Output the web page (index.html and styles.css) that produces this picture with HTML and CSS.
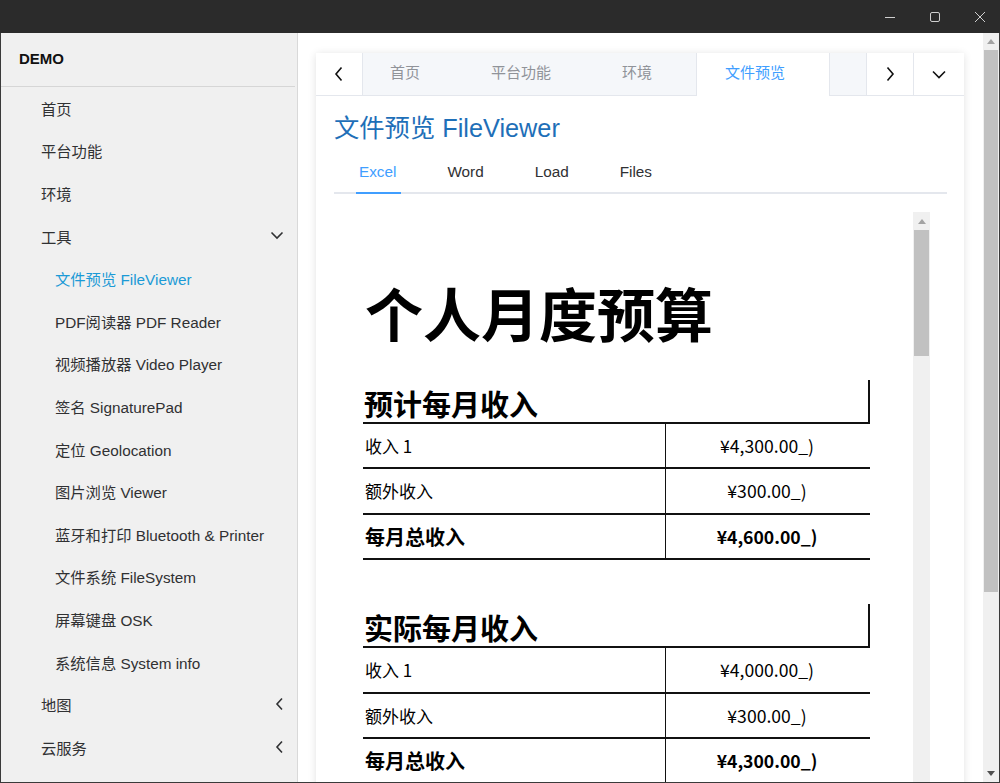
FILE: index.html
```html
<!DOCTYPE html>
<html lang="zh-CN">
<head>
<meta charset="utf-8">
<title>DEMO</title>
<link rel="stylesheet" href="styles.css">
</head>
<body>
<div class="window">
  <header class="titlebar">
    <span class="wc"><svg width="12" height="12" viewBox="0 0 12 12"><path d="M1 6.5h10" stroke="#cfcfcf" stroke-width="1"/></svg></span>
    <span class="wc"><svg width="12" height="12" viewBox="0 0 12 12"><rect x="1.5" y="1.5" width="9" height="9" rx="1.5" fill="none" stroke="#cfcfcf" stroke-width="1"/></svg></span>
    <span class="wc"><svg width="12" height="12" viewBox="0 0 12 12"><path d="M1 1l10 10M11 1L1 11" stroke="#cfcfcf" stroke-width="1"/></svg></span>
  </header>
  <div class="body">
    <aside class="sidebar">
      <div class="brand">DEMO</div>
      <nav class="menu">
        <div class="item">首页</div>
        <div class="item">平台功能</div>
        <div class="item">环境</div>
        <div class="item">工具<svg class="chev" width="14" height="9" viewBox="0 0 14 9"><path d="M1.5 1.5l5.5 5.5 5.5-5.5" fill="none" stroke="#303133" stroke-width="1.6"/></svg></div>
        <div class="item sub active">文件预览 FileViewer</div>
        <div class="item sub">PDF阅读器 PDF Reader</div>
        <div class="item sub">视频播放器 Video Player</div>
        <div class="item sub">签名 SignaturePad</div>
        <div class="item sub">定位 Geolocation</div>
        <div class="item sub">图片浏览 Viewer</div>
        <div class="item sub">蓝牙和打印 Bluetooth &amp; Printer</div>
        <div class="item sub">文件系统 FileSystem</div>
        <div class="item sub">屏幕键盘 OSK</div>
        <div class="item sub">系统信息 System info</div>
        <div class="item">地图<svg class="chev" width="9" height="14" viewBox="0 0 9 14"><path d="M7 1.5L2 7l5 5.5" fill="none" stroke="#303133" stroke-width="1.6"/></svg></div>
        <div class="item">云服务<svg class="chev" width="9" height="14" viewBox="0 0 9 14"><path d="M7 1.5L2 7l5 5.5" fill="none" stroke="#303133" stroke-width="1.6"/></svg></div>
      </nav>
    </aside>
    <main class="main">
      <section class="card">
        <div class="tabbar">
          <div class="nav-btn nav-left"><svg width="10" height="16" viewBox="0 0 10 16"><path d="M7.5 1.5L2 8l5.5 6.5" fill="none" stroke="#111" stroke-width="1.6"/></svg></div>
          <div class="tabs">
            <div class="tab">首页</div>
            <div class="tab">平台功能</div>
            <div class="tab">环境</div>
            <div class="tab active">文件预览</div>
          </div>
          <div class="nav-btn nav-right"><svg width="10" height="16" viewBox="0 0 10 16"><path d="M2.5 1.5L8 8l-5.5 6.5" fill="none" stroke="#111" stroke-width="1.6"/></svg></div>
          <div class="nav-btn nav-drop"><svg width="14" height="9" viewBox="0 0 14 9"><path d="M1 1.5l6 6 6-6" fill="none" stroke="#111" stroke-width="1.6"/></svg></div>
        </div>
        <div class="card-body">
          <h1 class="page-title">文件预览 FileViewer</h1>
          <div class="subtabs">
            <div class="subtab active">Excel</div>
            <div class="subtab">Word</div>
            <div class="subtab">Load</div>
            <div class="subtab">Files</div>
          </div>
          <div class="viewer">
            <div class="sheet">
              <div class="sheet-title">个人月度预算</div>
              <table class="budget">
                <tr><th colspan="2">预计每月收入</th></tr>
                <tr><td class="lbl">收入 1</td><td class="val">¥4,300.00_)</td></tr>
                <tr><td class="lbl">额外收入</td><td class="val">¥300.00_)</td></tr>
                <tr class="total"><td class="lbl">每月总收入</td><td class="val">¥4,600.00_)</td></tr>
              </table>
              <table class="budget">
                <tr><th colspan="2">实际每月收入</th></tr>
                <tr><td class="lbl">收入 1</td><td class="val">¥4,000.00_)</td></tr>
                <tr><td class="lbl">额外收入</td><td class="val">¥300.00_)</td></tr>
                <tr class="total"><td class="lbl">每月总收入</td><td class="val">¥4,300.00_)</td></tr>
              </table>
            </div>
            <div class="vscroll">
              <div class="arrow-up"></div>
              <div class="thumb"></div>
            </div>
          </div>
        </div>
      </section>
    </main>
    <div class="main-sb">
      <div class="arrow-up"></div>
      <div class="thumb"></div>
      <div class="spacer"></div>
      <div class="arrow-down"></div>
    </div>
  </div>
</div>
</body>
</html>
```
FILE: styles.css
```css
* { box-sizing: border-box; }
html, body { margin: 0; padding: 0; }
body {
  width: 1000px;
  height: 783px;
  overflow: hidden;
  font-family: "Liberation Sans", "Noto Sans CJK SC", sans-serif;
  color: #303133;
  background: #2b2b2b;
}
.window {
  width: 1000px;
  height: 783px;
  display: flex;
  flex-direction: column;
  border: 1px solid #3a3a3a;
  border-top: 0;
  background: #fff;
}
.titlebar {
  height: 33px;
  flex: none;
  background: #2b2b2b;
  display: flex;
  align-items: center;
  justify-content: flex-end;
  gap: 33px;
  padding-right: 14px;
  margin: 0 -1px;
}
.wc { display: flex; width: 12px; height: 12px; }

.body {
  flex: 1;
  display: flex;
  min-height: 0;
}

/* Sidebar */
.sidebar {
  width: 297px;
  flex: none;
  background: #f0f0f0;
  border-right: 1px solid #d9d9d9;
  overflow: hidden;
}
.brand {
  height: 54px;
  border-bottom: 1px solid #d6d6d6;
  margin-right: 2px;
  display: flex;
  align-items: center;
  padding-left: 18px;
  padding-bottom: 2px;
  font-weight: 700;
  font-size: 15px;
  color: #111;
}
.menu { display: flex; flex-direction: column; }
.item {
  height: 42.6px;
  flex: none;
  display: flex;
  align-items: center;
  justify-content: space-between;
  padding: 0 13px 1px 40px;
  font-size: 15.3px;
  color: #303133;
  white-space: nowrap;
}
.item.sub { padding-left: 54px; }
.item.active { color: #1b9ad6; }
.chev { flex: none; }

/* Main area */
.main {
  flex: 1;
  min-width: 0;
  background: #fff;
  padding: 20px 19px 0 18px;
  overflow: hidden;
}
.card {
  background: #fff;
  box-shadow: 0 1px 8px rgba(0,0,0,0.12);
  border-radius: 2px;
  height: 760px;
}
.tabbar {
  height: 43px;
  display: flex;
  border-bottom: 1px solid #e4e7ed;
}
.nav-btn {
  display: flex;
  align-items: center;
  justify-content: center;
  background: #fff;
  flex: none;
}
.nav-left { width: 47px; border-right: 1px solid #e4e7ed; }
.nav-right { width: 47px; border-left: 1px solid #e4e7ed; }
.nav-drop { width: 51px; border-left: 1px solid #e4e7ed; }
.tabs {
  flex: 1;
  display: flex;
  background: #f5f7fa;
}
.tab {
  height: 43px;
  line-height: 38px;
  padding: 0 44px 0 27px;
  font-size: 15px;
  color: #909399;
  font-family: "Noto Sans CJK SC", sans-serif;
  white-space: nowrap;
}
.tab.active {
  background: #fff;
  color: #409eff;
  border-left: 1px solid #e4e7ed;
  border-right: 1px solid #e4e7ed;
  margin-bottom: -1px;
  height: 43px;
  padding: 0 44px 0 28px;
  width: 134px;
}

.card-body { padding: 0 17px 0 18px; }
.page-title {
  margin: 15px 0 0;
  font-weight: 400;
  font-size: 25.3px;
  line-height: 34px;
  color: #1e6fb8;
  font-family: "Liberation Sans", "Noto Sans CJK SC", sans-serif;
}
.subtabs {
  margin-top: 7px;
  display: flex;
  border-bottom: 2px solid #e4e7ed;
}
.subtab {
  height: 40px;
  line-height: 40px;
  padding: 0 26px 0 25px;
  font-size: 15.3px;
  color: #303133;
  position: relative;
}
.subtab.active { color: #409eff; }
.subtab.active::after {
  content: "";
  position: absolute;
  left: 22px;
  right: 21px;
  bottom: -2px;
  height: 2px;
  background: #409eff;
}

/* Excel viewer */
.viewer {
  margin-top: 18px;
  margin-right: 17px;
  display: flex;
  height: 600px;
}
.sheet {
  flex: 1;
  padding: 60px 0 0 29px;
  overflow: hidden;
  font-family: "Noto Sans CJK SC", sans-serif;
  color: #000;
}
.sheet-title {
  font-weight: 700;
  font-size: 58px;
  line-height: 80px;
  margin: 0 0 28px 2px;
}
.budget {
  width: 507px;
  border-collapse: separate;
  border-spacing: 0;
  margin-bottom: 44px;
}
.budget th {
  text-align: left;
  vertical-align: bottom;
  font-weight: 700;
  font-size: 29px;
  line-height: 38px;
  padding: 4px 0 0 1px;
  border-bottom: 2px solid #111;
  border-right: 2px solid #111;
}
.budget td {
  font-size: 17px;
  line-height: 43.4px;
  padding: 0;
  border-bottom: 2px solid #111;
  white-space: nowrap;
}
.budget td.lbl {
  width: 303px;
  padding-left: 2px;
  border-right: 1px solid #111;
}
.budget td.val {
  text-align: center;
  padding-right: 2px;
  font-size: 17.6px;
}
.budget tr.total td.lbl { font-weight: 700; font-size: 20px; }
.budget tr.total td.val { font-weight: 700; font-size: 17.6px; }

.vscroll {
  width: 17px;
  flex: none;
  background: #f0f0f0;
  display: flex;
  flex-direction: column;
  align-items: center;
}
.arrow-up {
  height: 18px;
  width: 100%;
  display: flex;
  align-items: center;
  justify-content: center;
}
.arrow-up::before {
  content: "";
  border-left: 4px solid transparent;
  border-right: 4px solid transparent;
  border-bottom: 5px solid #a3a3a3;
}
.vscroll .thumb {
  width: 15px;
  height: 126px;
  background: #c1c1c1;
}

.main-sb {
  width: 16px;
  flex: none;
  background: #f0f0f0;
  display: flex;
  flex-direction: column;
}
.main-sb .arrow-up { height: 17px; }
.main-sb .thumb {
  height: 542px;
  background: #c1c1c1;
  margin: 0 1px;
}
.main-sb .spacer { flex: 1; }
.arrow-down {
  height: 17px;
  display: flex;
  align-items: center;
  justify-content: center;
}
.arrow-down::before {
  content: "";
  border-left: 4px solid transparent;
  border-right: 4px solid transparent;
  border-top: 5px solid #505050;
}
```
